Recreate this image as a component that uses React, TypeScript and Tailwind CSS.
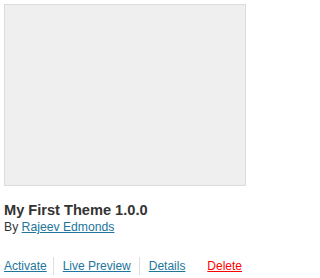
import React from 'react';

const LINK = 'text-[#21759b] underline underline-offset-[1px]';

export default function App() {
  return (
    <div className="w-[250px] h-[278px] bg-white px-[4px] pt-[4px] text-[#333] font-['Liberation_Sans',Arial,sans-serif]">
      {/* screenshot placeholder */}
      <div className="w-[242px] h-[182px] border border-[#dcdcdc] bg-[#efefef]" />

      <h3 className="mt-[16px] text-[14.6px] leading-[17px] font-bold text-[#333]">My First Theme 1.0.0</h3>
      <p className="mt-[1px] text-[12.2px] leading-[15px]">
        By <a href="#" className={LINK}>Rajeev Edmonds</a>
      </p>

      <div className="mt-[22px] flex items-center text-[12px] leading-[15px] w-[242px]">
        <a href="#" className={`${LINK} pr-[6px]`}>Activate</a>
        <span className="flex items-center border-l border-[#dfdfdf] h-[18px] pl-[9px] pr-[8px]">
          <a href="#" className={LINK}>Live Preview</a>
        </span>
        <span className="flex items-center border-l border-[#dfdfdf] h-[18px] pl-[9px]">
          <a href="#" className={LINK}>Details</a>
        </span>
        <a href="#" className="ml-auto mr-[4px] text-[#ff0000] underline underline-offset-[1px]">Delete</a>
      </div>
    </div>
  );
}
